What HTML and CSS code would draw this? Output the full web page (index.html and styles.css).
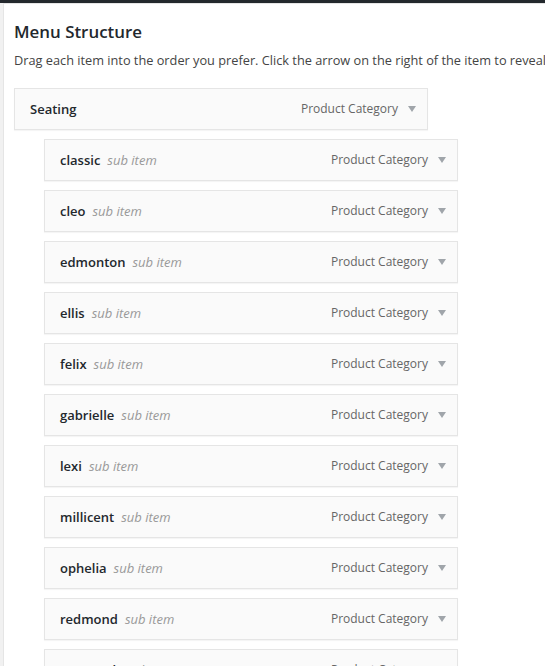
FILE: index.html
```html
<!DOCTYPE html>
<html lang="en">
<head>
<meta charset="utf-8">
<title>Menu Structure</title>
<link rel="stylesheet" href="styles.css">
</head>
<body>
<div class="topbar"></div>
<div class="wrap">
  <div class="panel">
    <h3 class="heading">Menu Structure</h3>
    <p class="desc">Drag each item into the order you prefer. Click the arrow on the right of the item to reveal additional configuration options.</p>
    <ul class="menu">
      <li class="item">
        <span class="title">Seating</span>
        <span class="controls"><span class="type">Product Category</span><svg class="arrow" width="8" height="6" viewBox="0 0 8 6"><polygon points="0,0 8,0 4,6"/></svg></span>
      </li>
      <li class="item sub"><span class="title">classic<span class="is-sub">sub item</span></span><span class="controls"><span class="type">Product Category</span><svg class="arrow" width="8" height="6" viewBox="0 0 8 6"><polygon points="0,0 8,0 4,6"/></svg></span></li>
      <li class="item sub"><span class="title">cleo<span class="is-sub">sub item</span></span><span class="controls"><span class="type">Product Category</span><svg class="arrow" width="8" height="6" viewBox="0 0 8 6"><polygon points="0,0 8,0 4,6"/></svg></span></li>
      <li class="item sub"><span class="title">edmonton<span class="is-sub">sub item</span></span><span class="controls"><span class="type">Product Category</span><svg class="arrow" width="8" height="6" viewBox="0 0 8 6"><polygon points="0,0 8,0 4,6"/></svg></span></li>
      <li class="item sub"><span class="title">ellis<span class="is-sub">sub item</span></span><span class="controls"><span class="type">Product Category</span><svg class="arrow" width="8" height="6" viewBox="0 0 8 6"><polygon points="0,0 8,0 4,6"/></svg></span></li>
      <li class="item sub"><span class="title">felix<span class="is-sub">sub item</span></span><span class="controls"><span class="type">Product Category</span><svg class="arrow" width="8" height="6" viewBox="0 0 8 6"><polygon points="0,0 8,0 4,6"/></svg></span></li>
      <li class="item sub"><span class="title">gabrielle<span class="is-sub">sub item</span></span><span class="controls"><span class="type">Product Category</span><svg class="arrow" width="8" height="6" viewBox="0 0 8 6"><polygon points="0,0 8,0 4,6"/></svg></span></li>
      <li class="item sub"><span class="title">lexi<span class="is-sub">sub item</span></span><span class="controls"><span class="type">Product Category</span><svg class="arrow" width="8" height="6" viewBox="0 0 8 6"><polygon points="0,0 8,0 4,6"/></svg></span></li>
      <li class="item sub"><span class="title">millicent<span class="is-sub">sub item</span></span><span class="controls"><span class="type">Product Category</span><svg class="arrow" width="8" height="6" viewBox="0 0 8 6"><polygon points="0,0 8,0 4,6"/></svg></span></li>
      <li class="item sub"><span class="title">ophelia<span class="is-sub">sub item</span></span><span class="controls"><span class="type">Product Category</span><svg class="arrow" width="8" height="6" viewBox="0 0 8 6"><polygon points="0,0 8,0 4,6"/></svg></span></li>
      <li class="item sub"><span class="title">redmond<span class="is-sub">sub item</span></span><span class="controls"><span class="type">Product Category</span><svg class="arrow" width="8" height="6" viewBox="0 0 8 6"><polygon points="0,0 8,0 4,6"/></svg></span></li>
      <li class="item sub"><span class="title">savannah<span class="is-sub">sub item</span></span><span class="controls"><span class="type">Product Category</span><svg class="arrow" width="8" height="6" viewBox="0 0 8 6"><polygon points="0,0 8,0 4,6"/></svg></span></li>
    </ul>
  </div>
</div>
</body>
</html>
```

FILE: styles.css
```css
html, body {
  margin: 0;
  padding: 0;
  height: 100%;
  overflow: hidden;
  background: #f1f1f1;
  font-family: "Open Sans", "Noto Sans", sans-serif;
  color: #444;
}

.topbar {
  height: 3px;
  background: #23282d;
}

.wrap {
  padding-left: 3px;
}

.panel {
  background: #fff;
  border-top: 1px solid #e5e5e5;
  border-left: 1px solid #e5e5e5;
  padding: 0 0 0 10px;
  min-height: 700px;
  overflow: hidden;
}

.heading {
  margin: 16px 0 0;
  font-size: 16.9px;
  line-height: 1.4;
  font-weight: 600;
  color: #23282d;
}

.desc {
  margin: 7px 0 0;
  font-size: 12.75px;
  line-height: 1.5;
  white-space: nowrap;
}

.menu {
  list-style: none;
  margin: 0;
  padding: 18px 0 0;
}

.item {
  box-sizing: border-box;
  width: 414px;
  height: 42px;
  margin: 0 0 9px;
  padding: 0 11px 0 15px;
  display: flex;
  align-items: center;
  justify-content: space-between;
  background: #fafafa;
  border: 1px solid #e5e5e5;
  box-shadow: 0 1px 1px rgba(0, 0, 0, 0.04);
}

.item.sub {
  margin-left: 30px;
}

.title {
  font-size: 13px;
  font-weight: 600;
  line-height: 20px;
  color: #23282d;
}

.is-sub {
  margin-left: 7px;
  font-weight: 400;
  font-style: italic;
  color: #999;
}

.controls {
  display: flex;
  align-items: center;
  gap: 10px;
}

.type {
  font-size: 12px;
  line-height: 20px;
  color: #666;
}

.arrow {
  display: block;
  fill: #a0a5aa;
  margin-top: 1px;
}
```
